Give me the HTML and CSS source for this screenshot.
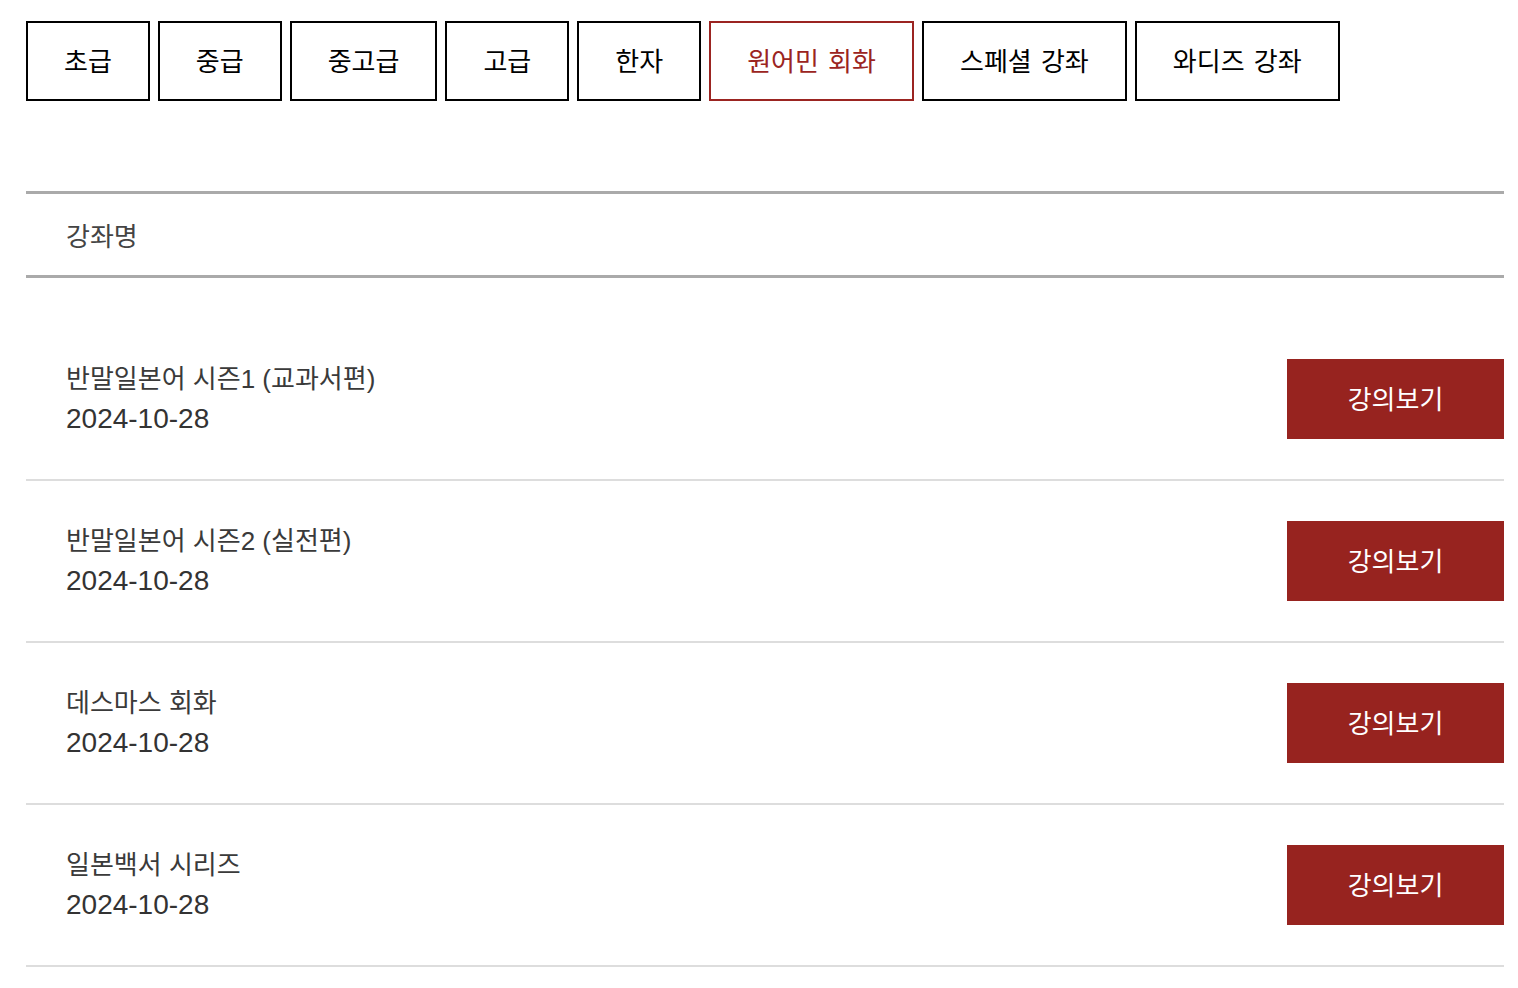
FILE: index.html
```html
<!DOCTYPE html>
<html lang="ko">
<head>
    <meta charset="UTF-8">
    <meta name="viewport" content="width=device-width, initial-scale=1.0">
    <title>강좌 목록</title>
    <link rel="stylesheet" href="styles.css">
</head>
<body>
    <div class="container">
        <div class="tabs">
            <a class="tab" href="#">초급</a>
            <a class="tab" href="#">중급</a>
            <a class="tab" href="#">중고급</a>
            <a class="tab" href="#">고급</a>
            <a class="tab" href="#">한자</a>
            <a class="tab active" href="#">원어민 회화</a>
            <a class="tab" href="#">스페셜 강좌</a>
            <a class="tab" href="#">와디즈 강좌</a>
        </div>

        <div class="list-head">강좌명</div>

        <ul class="course-list">
            <li class="course">
                <div class="course-info">
                    <p class="course-title">반말일본어 시즌1 (교과서편)</p>
                    <p class="course-date">2024-10-28</p>
                </div>
                <a class="view-btn" href="#">강의보기</a>
            </li>
            <li class="course">
                <div class="course-info">
                    <p class="course-title">반말일본어 시즌2 (실전편)</p>
                    <p class="course-date">2024-10-28</p>
                </div>
                <a class="view-btn" href="#">강의보기</a>
            </li>
            <li class="course">
                <div class="course-info">
                    <p class="course-title">데스마스 회화</p>
                    <p class="course-date">2024-10-28</p>
                </div>
                <a class="view-btn" href="#">강의보기</a>
            </li>
            <li class="course">
                <div class="course-info">
                    <p class="course-title">일본백서 시리즈</p>
                    <p class="course-date">2024-10-28</p>
                </div>
                <a class="view-btn" href="#">강의보기</a>
            </li>
        </ul>
    </div>
</body>
</html>
```

FILE: styles.css
```css
body {
    margin: 0;
    font-family: "Liberation Sans", "Noto Sans CJK KR", sans-serif;
    background: #fff;
    color: #333;
}
.container {
    padding: 21px 14px 0 26px;
}
.tabs {
    display: flex;
    gap: 8px;
}
.tab {
    box-sizing: border-box;
    height: 80px;
    padding: 0 36px 4px;
    display: flex;
    align-items: center;
    justify-content: center;
    border: 2px solid #000;
    color: #000;
    font-size: 26px;
    word-spacing: 2px;
    text-decoration: none;
    white-space: nowrap;
}
.tab.active {
    border-color: #9b2421;
    color: #9b2421;
}
.list-head {
    margin-top: 90px;
    height: 81px;
    display: flex;
    align-items: center;
    padding-left: 40px;
    border-top: 3px solid #aaa;
    border-bottom: 3px solid #aaa;
    font-size: 26px;
    color: #444;
}
.course-list {
    list-style: none;
    margin: 41px 0 0;
    padding: 0;
}
.course {
    display: flex;
    justify-content: space-between;
    align-items: center;
    padding: 40px 0 40px 40px;
    border-bottom: 2px solid #ddd;
}
.course-info p {
    margin: 0;
}
.course-title {
    font-size: 26px;
    line-height: 40px;
    color: #3a3a3a;
}
.course-date {
    font-size: 28px;
    line-height: 40px;
    color: #333;
}
.view-btn {
    width: 217px;
    height: 80px;
    padding-bottom: 3px;
    box-sizing: border-box;
    display: flex;
    align-items: center;
    justify-content: center;
    background: #97231f;
    color: #fff;
    font-size: 26px;
    text-decoration: none;
}
```
